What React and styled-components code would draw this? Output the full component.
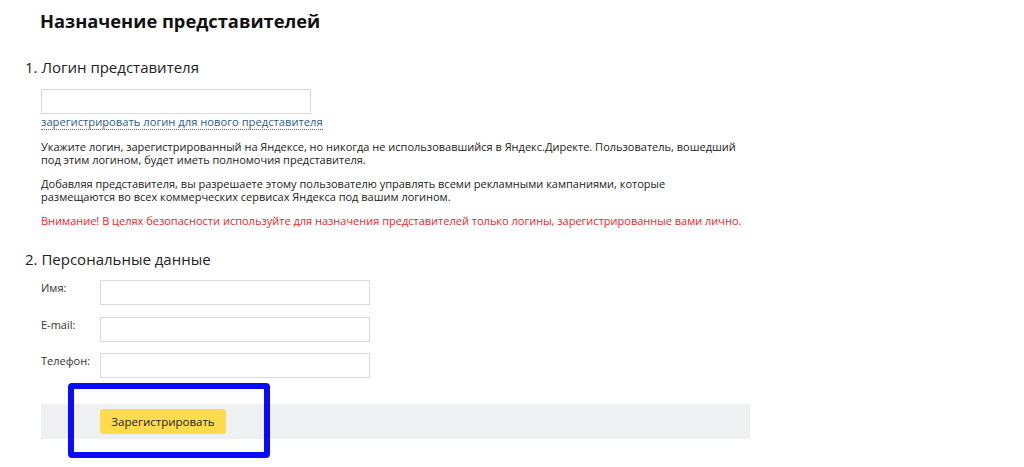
import React from "react";
import styled, { createGlobalStyle } from "styled-components";

const Global = createGlobalStyle`
  html, body { margin: 0; padding: 0; background: #fff; }
  body { font-family: "Open Sans", "Liberation Sans", Arial, sans-serif; color: #000; }
  * { box-sizing: border-box; }
`;

const Page = styled.div`
  position: relative;
  width: 1024px;
  height: 467px;
  overflow: hidden;
  padding: 9px 0 0 25px;
`;

const Title = styled.h1`
  margin: 0 0 0 15px;
  font-size: 18.3px;
  line-height: 24px;
  font-weight: 700;
  color: #111;
`;

const Section = styled.section`
  display: flex;
  flex-direction: column;
  margin-top: ${(p) => p.$top}px;
`;

const SectionHead = styled.h2`
  margin: 0;
  font-size: 15px;
  line-height: 20px;
  font-weight: 400;
  color: #222;
`;

const Body = styled.div`
  padding-left: 16px;
  display: flex;
  flex-direction: column;
`;

const Input = styled.input`
  display: block;
  width: 270px;
  height: 25px;
  border: 1px solid #d9d9d9;
  background: #fff;
  margin: 0;
  padding: 0 6px;
  outline: none;
`;

const LoginInput = styled(Input)`
  margin-top: 12px;
`;

const DashLink = styled.a`
  align-self: flex-start;
  margin-top: 0;
  font-size: 11.2px;
  line-height: 15px;
  color: #2a5e8e;
  text-decoration: none;
  border-bottom: 1px dotted #2a7bb5;
  cursor: pointer;
`;

const Para = styled.p`
  margin: ${(p) => p.$top}px 0 0;
  width: 697px;
  font-size: 11px;
  line-height: 13px;
  color: ${(p) => (p.$warn ? "#f4232a" : "#222")};
  white-space: ${(p) => (p.$warn ? "nowrap" : "normal")};
`;

const FormGrid = styled.div`
  margin-top: 11px;
  display: grid;
  grid-template-columns: 59px 270px;
  row-gap: 11.5px;
  align-items: start;
`;

const Label = styled.label`
  font-size: 11px;
  line-height: 14px;
  padding-top: 1px;
  color: #333;
`;

const ActionBar = styled.div`
  margin-top: 26px;
  margin-left: 16px;
  width: 709px;
  height: 35px;
  background: #eef0f2;
  padding: 5px 0 0 59px;
`;

const Button = styled.button`
  width: 126px;
  height: 25px;
  border: none;
  border-radius: 3px;
  background: #ffdb4d;
  font-family: inherit;
  font-size: 11.5px;
  color: #222;
  padding: 0;
  cursor: pointer;
`;

const Highlight = styled.div`
  position: absolute;
  left: 68px;
  top: 383px;
  width: 202px;
  height: 75px;
  border: 6px solid #0a0aff;
  border-radius: 4px;
  pointer-events: none;
`;

export default function App() {
  return (
    <>
      <Global />
      <Page>
        <Title>Назначение представителей</Title>
        <Section $top={24}>
          <SectionHead>1. Логин представителя</SectionHead>
          <Body>
            <LoginInput />
            <DashLink>зарегистрировать логин для нового представителя</DashLink>
            <Para $top={10}>
              Укажите логин, зарегистрированный на Яндексе, но никогда не использовавшийся в Яндекс.Директе. Пользователь, вошедший под этим логином, будет иметь полномочия представителя.
            </Para>
            <Para $top={11}>
              Добавляя представителя, вы разрешаете этому пользователю управлять всеми рекламными кампаниями, которые размещаются во всех коммерческих сервисах Яндекса под вашим логином.
            </Para>
            <Para $top={11} $warn>
              Внимание! В целях безопасности используйте для назначения представителей только логины, зарегистрированные вами лично.
            </Para>
          </Body>
        </Section>
        <Section $top={22}>
          <SectionHead>2. Персональные данные</SectionHead>
          <Body>
            <FormGrid>
              <Label>Имя:</Label>
              <Input />
              <Label>E-mail:</Label>
              <Input />
              <Label>Телефон:</Label>
              <Input />
            </FormGrid>
          </Body>
        </Section>
        <ActionBar>
          <Button>Зарегистрировать</Button>
        </ActionBar>
        <Highlight />
      </Page>
    </>
  );
}
